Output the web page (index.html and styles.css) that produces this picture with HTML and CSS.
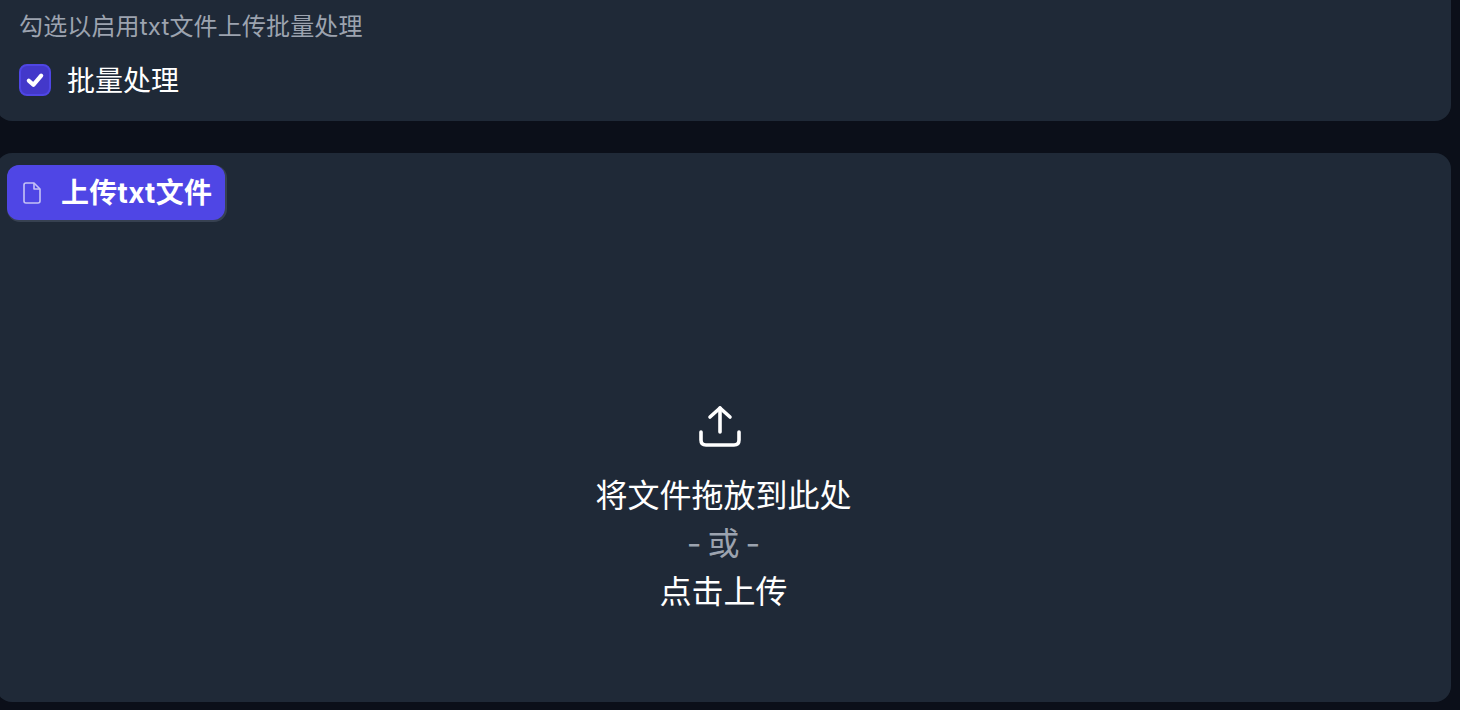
FILE: index.html
```html
<!DOCTYPE html>
<html lang="zh-CN">
<head>
  <meta charset="UTF-8">
  <title>批量处理</title>
  <link rel="stylesheet" href="styles.css">
</head>
<body>

  <section class="panel batch-panel">
    <p class="hint">勾选以启用txt文件上传批量处理</p>
    <label class="check-row">
      <span class="checkbox">
        <svg viewBox="0 0 16 16" width="22" height="22" fill="none" stroke="#fff" stroke-width="3" stroke-linecap="round" stroke-linejoin="round">
          <path d="M3.5 8.5 L6.8 11.5 L12.5 4.8"/>
        </svg>
      </span>
      <span class="check-text">批量处理</span>
    </label>
  </section>

  <section class="panel upload-panel">
    <div class="upload-label">
      <svg viewBox="0 0 20 24" width="20" height="24" fill="none" stroke="#c5c2f5" stroke-width="1.6" stroke-linejoin="round">
        <path d="M4 2 H12 L18 8 V20 Q18 22 16 22 H4 Q2 22 2 20 V4 Q2 2 4 2 Z"/>
        <path d="M12 2 V8 H18"/>
      </svg>
      <span class="label-text">上传txt文件</span>
    </div>
    <div class="dropzone">
      <svg class="upload-icon" viewBox="0 0 42 42" width="42" height="42" fill="none" stroke="#fff" stroke-width="3.6" stroke-linecap="round" stroke-linejoin="round">
        <path d="M21 27 V3"/>
        <path d="M11 12 L21 3 L31 12"/>
        <path d="M2 27 V35 Q2 40 7 40 H35 Q40 40 40 35 V27"/>
      </svg>
      <div class="drop-text">将文件拖放到此处</div>
      <div class="drop-or">- 或 -</div>
      <div class="drop-text">点击上传</div>
    </div>
  </section>

</body>
</html>
```

FILE: styles.css
```css
html, body {
  height: 100%;
}

body {
  margin: 0;
  padding-right: 9px;
  background-color: #0b0f19;
  color: white;
  font-family: Inter, "Noto Sans CJK SC", sans-serif;
  overflow: hidden;
}

.panel {
  margin-left: -4px;
  background-color: #1f2937;
  border-radius: 16px;
}

.batch-panel {
  height: 161px;
  margin-top: -40px;
  margin-bottom: 32px;
  padding: 49px 0 0 23px;
  box-sizing: border-box;
}

.hint {
  margin: 0 0 14px;
  color: #9ca3af;
  font-size: 24px;
  line-height: 36px;
  letter-spacing: 0.15px;
}

.check-row {
  display: flex;
  align-items: center;
  gap: 16px;
  font-size: 28px;
  line-height: 40px;
}

.check-text {
  margin-top: 2px;
}

.checkbox {
  display: flex;
  align-items: center;
  justify-content: center;
  width: 28px;
  height: 28px;
  border: 2px solid #4f46e5;
  border-radius: 8px;
  background-color: #4338ca;
}

.upload-panel {
  position: relative;
  height: 549px;
}

.upload-label {
  position: absolute;
  left: 11px;
  top: 12px;
  display: flex;
  align-items: center;
  gap: 19px;
  height: 55px;
  padding: 0 13px 0 15px;
  box-sizing: border-box;
  border-radius: 12px;
  background-color: #4f46e5;
  box-shadow: 1px 1px 0 1px #374151;
  font-size: 28px;
  font-weight: 700;
}

.label-text {
  margin-bottom: 4px;
  letter-spacing: 0.3px;
}

.dropzone {
  display: flex;
  flex-direction: column;
  align-items: center;
  height: 100%;
  padding: 252px 0 0;
  box-sizing: border-box;
}

.upload-icon {
  margin-left: -8px;
  margin-bottom: 25px;
}

.drop-text {
  font-size: 32px;
  line-height: 48px;
}

.drop-or {
  color: #9ca3af;
  font-size: 32px;
  line-height: 48px;
  word-spacing: -3px;
}
```
